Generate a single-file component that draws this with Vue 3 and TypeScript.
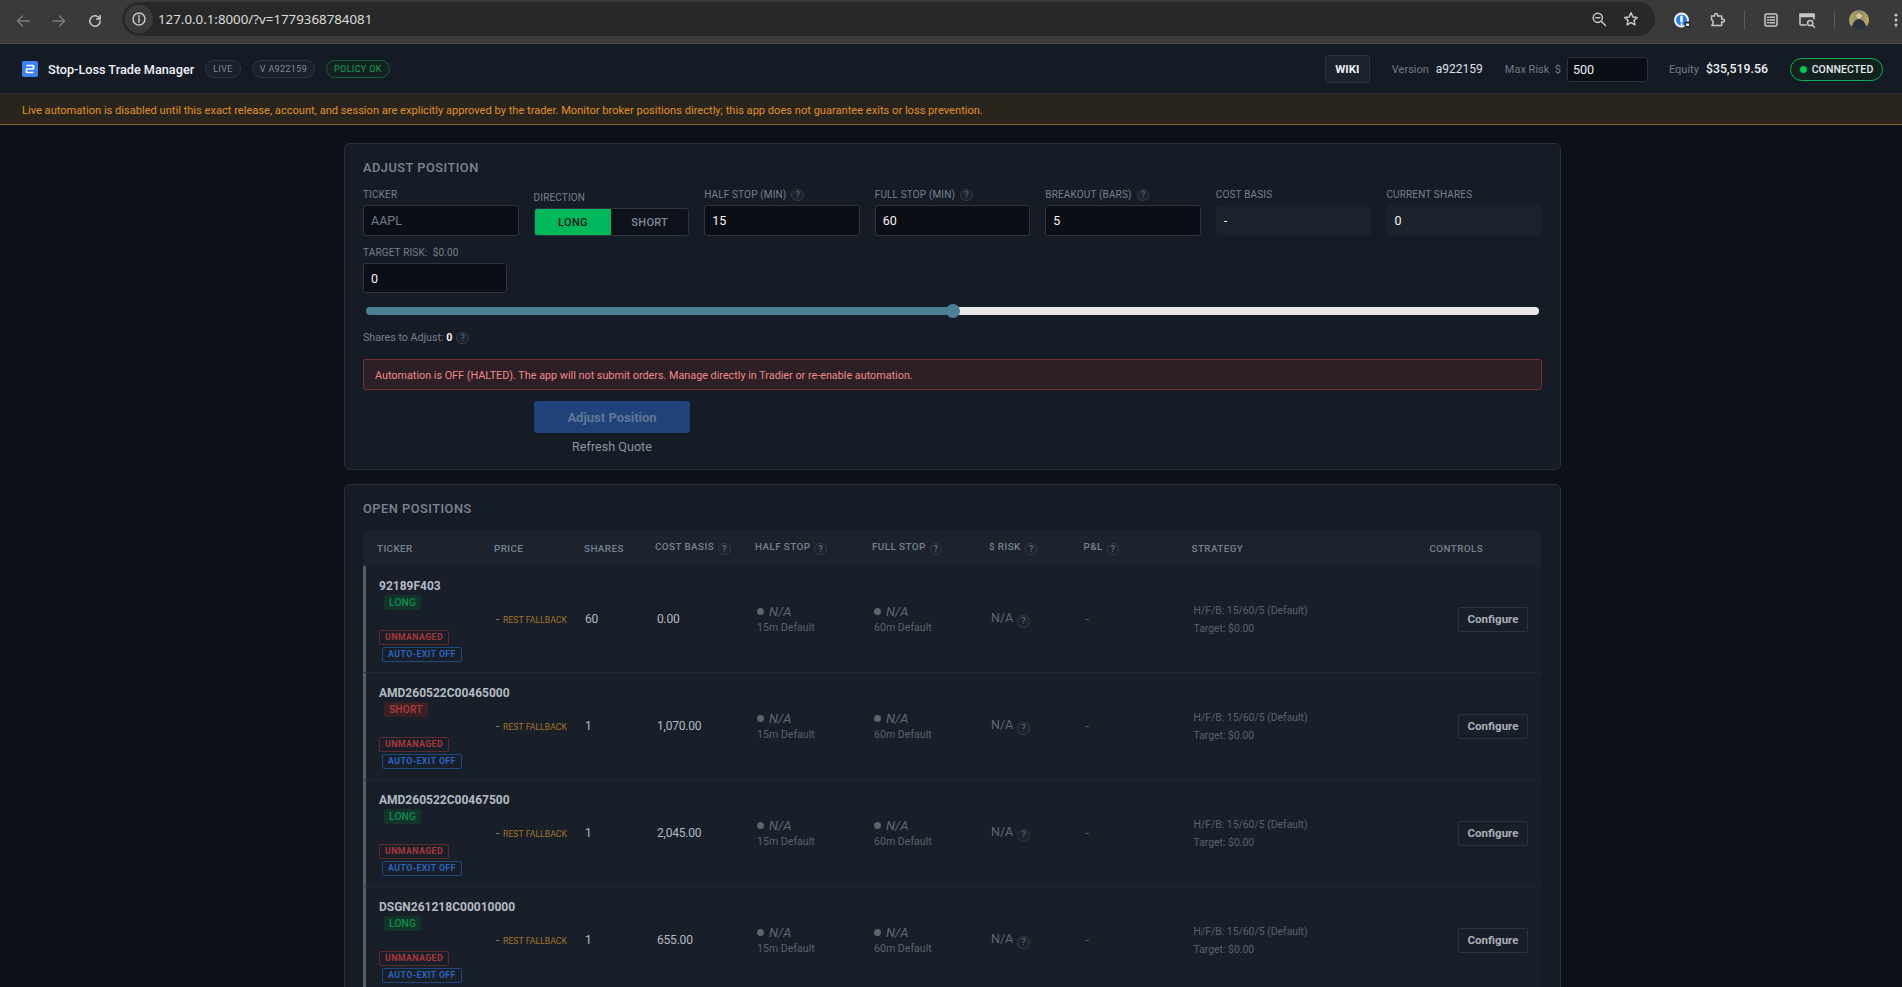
<script setup lang="ts">
interface Pos { ticker: string; dir: 'LONG' | 'SHORT'; shares: string; cost: string }
const rows: Pos[] = [
  { ticker: '92189F403', dir: 'LONG', shares: '60', cost: '0.00' },
  { ticker: 'AMD260522C00465000', dir: 'SHORT', shares: '1', cost: '1,070.00' },
  { ticker: 'AMD260522C00467500', dir: 'LONG', shares: '1', cost: '2,045.00' },
  { ticker: 'DSGN261218C00010000', dir: 'LONG', shares: '1', cost: '655.00' },
]
const heads = [
  { t: 'TICKER' }, { t: 'PRICE' }, { t: 'SHARES' }, { t: 'COST BASIS', q: true }, { t: 'HALF STOP', q: true },
  { t: 'FULL STOP', q: true }, { t: '$ RISK', q: true }, { t: 'P&L', q: true }, { t: 'STRATEGY' }, { t: 'CONTROLS' },
]
</script>

<template>
  <div class="page">
    <div class="browser">
      <div class="nav">
        <svg width="16" height="16" viewBox="0 0 16 16" class="ic dim"><path d="M14 8H3M7.5 3 2.5 8l5 5" /></svg>
        <svg width="16" height="16" viewBox="0 0 16 16" class="ic dim"><path d="M2 8h11M8.5 3l5 5-5 5" /></svg>
        <svg width="16" height="16" viewBox="0 0 16 16" class="ic"><path d="M13.2 8a5.2 5.2 0 1 1-1.5-3.7L13.2 6M13.2 2.4V6H9.6" /></svg>
      </div>
      <div class="omni">
        <span class="site">
          <svg width="16" height="16" viewBox="0 0 16 16" class="ic"><circle cx="8" cy="8" r="6" /><path d="M8 7.2v4M8 4.6v1.2" /></svg>
        </span>
        <span class="url">127.0.0.1:8000/?v=1779368784081</span>
        <span class="omni-end">
          <svg width="16" height="16" viewBox="0 0 16 16" class="ic"><circle cx="6.8" cy="6.8" r="4.6" /><path d="M10.2 10.2 14.5 14.5M4.8 6.8h4" /></svg>
          <svg width="16" height="16" viewBox="0 0 16 16" class="ic"><path d="M8 1.8l1.9 4.1 4.4.5-3.3 3 .9 4.4L8 11.6l-3.9 2.2.9-4.4-3.3-3 4.4-.5z" /></svg>
        </span>
      </div>
      <div class="tools">
        <svg class="t-acc" width="18" height="18" viewBox="0 0 18 18"><circle cx="8.500" cy="9" r="7.500" fill="#f2f5fa" /><circle cx="8.500" cy="9" r="5.500" fill="#2b7de9" /><rect x="7.300" y="4.500" width="2.400" height="7" rx="1" fill="#fff" /><rect x="7.600" y="12.300" width="1.800" height="1.800" fill="#fff" /><rect x="11.500" y="10.500" width="6" height="6" rx="1" fill="#2a2a2a" /><rect x="13" y="12.500" width="3" height="2.500" fill="#e8e8e8" /></svg>
        <svg class="t-puz" width="16" height="16" viewBox="0 0 16 16"><path class="ic" d="M2.500 4h3.200V3a1.500 1.500 0 0 1 3 0v1h4v3.200H14a1.400 1.400 0 0 1 0 2.800h-1.300v3.500H2.800L4 11.500V9L2.500 7.500z" /></svg>
        <span class="sep s1"></span>
        <svg class="t-list" width="16" height="16" viewBox="0 0 16 16"><g class="ic"><rect x="2" y="2" width="12" height="12" rx="1.500" /><path d="M4.500 5.200h1M7 5.200h4.500M4.500 8h1M7 8h4.500M4.500 10.800h1M7 10.800h4.500" /></g></svg>
        <svg class="t-find" width="18" height="18" viewBox="0 0 18 18"><g class="ic"><path d="M8 14H3a1 1 0 0 1-1-1V4h14v4" /><path d="M2 3h14v2.500H2z" fill="#c7c7c7" /><circle cx="12.200" cy="12" r="2.600" /><path d="M14.200 14l2.300 2.300" /></g></svg>
        <span class="sep s2"></span>
        <span class="avatar"></span>
        <svg class="t-dots" width="4" height="16" viewBox="0 0 4 16"><circle cx="2" cy="3" r="1.500" fill="#c7c7c7" /><circle cx="2" cy="8" r="1.500" fill="#c7c7c7" /><circle cx="2" cy="13" r="1.500" fill="#c7c7c7" /></svg>
      </div>
    </div>

    <header class="topbar">
      <div class="brand">
        <svg width="16" height="16" viewBox="0 0 16 16" class="logo"><rect width="16" height="16" rx="2" fill="#3b82f6" /><path d="M4.500 4.500h6.500a.5.500 0 0 1 .5.500v2.500a.5.500 0 0 1-.5.500H5a.5.500 0 0 0-.5.500v2.500a.5.500 0 0 0 .5.500h6.500" fill="none" stroke="#fff" stroke-width="1.700" /></svg>
        <span class="title">Stop-Loss Trade Manager</span>
        <span class="chip">LIVE</span>
        <span class="chip">V A922159</span>
        <span class="chip ok">POLICY OK</span>
      </div>
      <div class="status">
        <button class="wiki">WIKI</button>
        <span class="lab ver">Version</span><span class="val">a922159</span>
        <span class="lab risk">Max Risk&nbsp; $</span><input class="risk-in" value="500" />
        <span class="lab eq">Equity</span><span class="val strong">$35,519.56</span>
        <span class="conn"><i></i>CONNECTED</span>
      </div>
    </header>

    <div class="warn">Live automation is disabled until this exact release, account, and session are explicitly approved by the trader. Monitor broker positions directly; this app does not guarantee exits or loss prevention.</div>

    <main class="main">
      <section class="panel adjust">
        <h2>ADJUST POSITION</h2>
        <div class="form">
          <label class="f"><span class="l">TICKER</span><input placeholder="AAPL" /></label>
          <div class="f"><span class="l dirl">DIRECTION</span>
            <div class="toggle"><span class="on">LONG</span><span>SHORT</span></div>
          </div>
          <label class="f"><span class="l">HALF STOP (MIN) <i class="q">?</i></span><input value="15" /></label>
          <label class="f"><span class="l">FULL STOP (MIN) <i class="q">?</i></span><input value="60" /></label>
          <label class="f"><span class="l">BREAKOUT (BARS) <i class="q">?</i></span><input value="5" /></label>
          <label class="f"><span class="l">COST BASIS</span><input class="ro" value="-" readonly /></label>
          <label class="f"><span class="l">CURRENT SHARES</span><input class="ro" value="0" readonly /></label>
        </div>
        <label class="f target"><span class="l">TARGET RISK:&nbsp; $0.00</span><input value="0" /></label>
        <input class="slider" type="range" min="0" max="100" value="50" />
        <div class="shares"><span>Shares to Adjust: <b>0</b></span><i class="q">?</i></div>
        <div class="alert">Automation is OFF (HALTED). The app will not submit orders. Manage directly in Tradier or re-enable automation.</div>
        <div class="actions">
          <button class="primary">Adjust Position</button>
          <span class="refresh">Refresh Quote</span>
        </div>
      </section>

      <section class="panel positions">
        <h2>OPEN POSITIONS</h2>
        <table>
          <colgroup>
            <col style="width:117px" /><col style="width:90px" /><col style="width:71px" /><col style="width:100px" /><col style="width:117px" />
            <col style="width:117px" /><col style="width:94.5px" /><col style="width:108px" /><col style="width:238px" /><col style="width:125.5px" />
          </colgroup>
          <thead>
            <tr><th v-for="h in heads" :key="h.t">{{ h.t }}<i v-if="h.q" class="q">?</i></th></tr>
          </thead>
          <tbody>
            <tr v-for="r in rows" :key="r.ticker">
              <td class="tick">
                <div class="name">{{ r.ticker }}</div>
                <div class="dir" :class="r.dir.toLowerCase()">{{ r.dir }}</div>
                <div class="tag un">UNMANAGED</div>
                <div class="tag ae">AUTO-EXIT OFF</div>
              </td>
              <td class="price">- <span>REST FALLBACK</span></td>
              <td class="num sh">{{ r.shares }}</td>
              <td class="num co">{{ r.cost }}</td>
              <td class="stop"><div class="na"><i class="dot"></i><em>N/A</em></div><div class="sub">15m Default</div></td>
              <td class="stop"><div class="na"><i class="dot"></i><em>N/A</em></div><div class="sub">60m Default</div></td>
              <td class="rk">N/A <i class="q">?</i></td>
              <td class="pl">-</td>
              <td class="strat"><div>H/F/B: 15/60/5 (Default)</div><div>Target: $0.00</div></td>
              <td class="ctl"><button>Configure</button></td>
            </tr>
          </tbody>
        </table>
      </section>
    </main>
  </div>
</template>

<style>
html, body { margin: 0; height: 100%; overflow: hidden; background: #0c1018; }
</style>

<style scoped>
.page { height: 987px; overflow: hidden; background: #0c1018; font-family: Roboto, "Noto Sans", sans-serif; color: #e6e9ee; display: flex; flex-direction: column; }
.browser { height: 43px; flex: none; background: #3a3a3a; border-bottom: 1px solid #4a4a4a; display: flex; align-items: center; padding-left: 15px; box-sizing: content-box; }
.nav { display: flex; gap: 20px; width: 107px; flex: none; margin-top: -2px; }
.ic { fill: none; stroke: #c7c7c7; stroke-width: 1.500; stroke-linecap: round; stroke-linejoin: round; }
.ic.dim { stroke: #7b7b7b; }
.omni { width: 1533px; height: 34px; flex: none; background: #282828; border-radius: 17px; display: flex; align-items: center; margin-top: -6px; }
.site { width: 28px; height: 28px; margin-left: 3px; border-radius: 50%; background: #3a3a3a; display: flex; align-items: center; justify-content: center; flex: none; }
.url { margin-left: 5px; font-size: 13.300px; color: #dcdcdc; font-family: "Noto Sans", sans-serif; }
.omni-end { margin-left: auto; margin-right: 16px; display: flex; gap: 16px; }
.tools { flex: 1; display: flex; align-items: center; margin-top: -4px; padding-left: 18px; }
.tools .sep { width: 1px; height: 18px; background: #5c5c5c; }
.t-puz { margin-left: 18px; }
.s1 { margin-left: 19px; }
.t-list { margin-left: 18px; }
.t-find { margin-left: 19px; }
.s2 { margin-left: 18px; }
.avatar { width: 20px; height: 20px; border-radius: 50%; margin-left: 14px; background: radial-gradient(circle at 50% 30%, #d9bda0 0 15%, transparent 17%), radial-gradient(ellipse 38% 55% at 50% 100%, #2a3340 0 96%, transparent 100%), linear-gradient(90deg, #c2a95f, #7f8e66 50%, #c2a95f); }
.t-dots { margin-left: 25px; }

.topbar { height: 50px; flex: none; box-sizing: border-box; background: #151b25; border-bottom: 1px solid #2a303a; display: flex; align-items: center; justify-content: space-between; padding: 1px 19px 0 22px; }
.brand { display: flex; align-items: center; }
.logo { margin-right: 10px; }
.title { font-size: 12.700px; font-weight: 500; color: #eef1f5; margin-right: 11px; white-space: nowrap; }
.chip { height: 18px; box-sizing: border-box; border: 1px solid #2f3744; background: #1a212c; border-radius: 9px; font-size: 9px; letter-spacing: .35px; color: #7f8a98; padding: 0 7px; display: flex; align-items: center; margin-right: 11px; white-space: nowrap; }
.chip.ok { color: #12a150; border-color: #14603c; background: #14211f; }
.status { display: flex; align-items: center; white-space: nowrap; }
.wiki { width: 45px; height: 28px; background: #1b222c; border: 1px solid #2c333e; border-radius: 3px; color: #eef1f5; font: 700 11.500px Roboto, sans-serif; margin-right: 22px; padding: 0; }
.lab { font-size: 11px; color: #6f7b89; }
.val { font-size: 12px; color: #dfe3e8; margin-left: 7px; }
.val.strong { font-size: 12.300px; font-weight: 500; color: #eef1f5; margin-left: 7px; }
.risk { margin-left: 22px; }
.risk-in { width: 81px; height: 25px; box-sizing: border-box; margin-left: 6px; background: #0b0e15; border: 1px solid #2c323d; border-radius: 3px; color: #eef1f5; font: 12.500px Roboto, sans-serif; padding: 0 5px; outline: none; }
.eq { margin-left: 21px; }
.conn { margin-left: 22px; height: 23px; width: 93px; box-sizing: border-box; border: 1px solid #10ad5a; border-radius: 12px; background: #12221f; display: flex; align-items: center; justify-content: center; font-size: 10.500px; font-weight: 500; color: #e6e9ee; letter-spacing: .1px; }
.conn i { width: 7px; height: 7px; border-radius: 50%; background: #00c853; margin-right: 5px; }

.warn { height: 31px; flex: none; box-sizing: border-box; background: #2a251c; border-bottom: 1px solid #8a5f22; font-size: 11.100px; color: #e08f2c; display: flex; align-items: center; padding: 2px 0 0 22px; white-space: nowrap; }

.main { width: 1217px; margin: 18px 0 0 344px; display: flex; flex-direction: column; gap: 14px; flex: none; }
.panel { background: #161c25; border: 1px solid #2b313b; border-radius: 6px; padding: 0 18px; }
h2 { margin: 0; font-size: 12.800px; font-weight: 500; letter-spacing: .5px; color: #7b8694; line-height: 18px; padding-top: 15px; }
.form { display: grid; grid-template-columns: repeat(7, 1fr); gap: 15px; margin-top: 11px; }
.f { display: flex; flex-direction: column; justify-content: flex-end; }
.l { font-size: 10px; color: #758190; letter-spacing: .15px; line-height: 14px; margin-bottom: 3px; display: flex; align-items: center; white-space: nowrap; gap: 5px; }
.dirl { margin-bottom: 3px; }
input { background: #0b0e15; border: 1px solid #2f3540; border-radius: 3px; height: 31px; box-sizing: border-box; padding: 0 7px; color: #f2f4f7; font: 12.500px Roboto, sans-serif; outline: none; width: 100%; min-width: 0; }
input::placeholder { color: #747d89; }
input.ro { background: #1b222c; border-color: #1b222c; }
.toggle { height: 28px; box-sizing: border-box; display: grid; grid-template-columns: 1fr 1fr; background: #0d1119; border: 1px solid #2f3540; border-radius: 3px; overflow: hidden; font-size: 11px; color: #7f8a98; letter-spacing: .3px; }
.toggle span { display: flex; align-items: center; justify-content: center; font-weight: 500; }
.toggle .on { background: #00b85c; color: #0c1a14; }
.q { display: inline-flex; width: 12.500px; height: 12.500px; box-sizing: border-box; border: 1px solid #333b47; border-radius: 50%; background: #1c232d; align-items: center; justify-content: center; font-size: 8.500px; font-style: normal; color: #6a7584; flex: none; letter-spacing: 0; }
.target { width: 144px; margin-top: 10px; }
.target input { height: 30px; }
.slider { appearance: none; -webkit-appearance: none; display: block; width: 1173px; height: 8px; margin: 14px 0 0 3px; padding: 0; border: 0; border-radius: 4px; background: linear-gradient(90deg, #4b7f93 0 50%, #e8e9e9 50%); }
.slider::-webkit-slider-thumb { -webkit-appearance: none; width: 14px; height: 14px; border-radius: 50%; background: #4b8197; }
.shares { display: flex; align-items: center; gap: 4px; font-size: 10.700px; color: #758190; margin-top: 15px; line-height: 16px; }
.shares b { color: #f0f2f5; }
.alert { margin-top: 13px; height: 31px; box-sizing: border-box; background: #2d1f26; border: 1px solid #7a2f38; border-radius: 3px; color: #f08a8a; font-size: 10.800px; display: flex; align-items: center; padding: 1px 0 0 11px; }
.actions { width: 156px; margin: 11px 0 0 171px; padding-bottom: 13px; display: flex; flex-direction: column; align-items: center; }
.primary { width: 100%; height: 32px; background: #20427a; border: 0; border-radius: 3px; color: #617796; font: 700 13px Roboto, sans-serif; }
.refresh { font-size: 12.600px; color: #8a939f; line-height: 18px; margin-top: 5px; }

.positions h2 { padding-top: 15px; }
table { width: 1178px; table-layout: fixed; border-collapse: separate; border-spacing: 0; margin-top: 12px; }
th { height: 36px; box-sizing: border-box; background: #1c232d; text-align: left; padding: 0 0 0 14px; font-size: 9.900px; font-weight: 500; color: #76828f; letter-spacing: .4px; white-space: nowrap; }
th:first-child { border-top-left-radius: 4px; }
th:last-child { border-top-right-radius: 4px; }
th .q { margin-left: 4px; vertical-align: -2px; }
td { padding: 0 0 0 14px; border-bottom: 1px solid #212832; background: #181f29; vertical-align: middle; white-space: nowrap; color: #aab1b9; }
.tick { border-left: 3px solid #565c64; padding: 11px 0 10px 13px; }
.name { font-size: 12px; font-weight: 700; color: #b4bac2; line-height: 18px; }
.dir { width: fit-content; height: 15px; margin-left: 5px; margin-bottom: 20px; padding: 0 5px; border-radius: 2px; font-size: 10.200px; font-weight: 500; line-height: 15px; letter-spacing: .2px; }
.dir.long { background: #12342a; color: #0f8f4e; }
.dir.short { background: #3a2025; color: #b33a3e; }
.tag { width: fit-content; height: 15px; box-sizing: border-box; border-radius: 2px; border: 1px solid; font-size: 8.800px; font-weight: 700; line-height: 13px; letter-spacing: .4px; padding: 0 5px; }
.un { color: #a8373b; border-color: #5f2a2e; }
.ae { color: #2a65bd; border-color: #1f4a80; margin: 2px 0 0 3px; }
.price { font-size: 11.500px; padding-left: 16px; color: #8b929a; }
.price span { font-size: 8.700px; color: #a2742a; margin-left: 1px; }
.num { font-size: 12px; letter-spacing: -.2px; color: #b4bac2; }
.sh { padding-left: 15px; }
.co { padding-left: 16px; }
.na { display: flex; align-items: center; line-height: 16px; padding: 1px 0 0 2px; }
.dot { width: 7px; height: 7px; border-radius: 50%; background: #5e646c; margin-right: 5px; }
.na em { font-size: 13px; color: #5f6873; }
.sub { font-size: 10.600px; color: #59626d; line-height: 16px; padding-left: 2px; }
.stop { vertical-align: middle; }
.rk { font-size: 12.500px; color: #5f6873; padding-left: 16px; }
.rk .q { vertical-align: -2px; margin-left: 1px; }
.pl { color: #5f6873; font-size: 12px; padding-left: 16px; }
.strat { font-size: 10.400px; color: #59626d; line-height: 18px; padding: 1px 0 0 16px; }
.ctl { text-align: right; padding-right: 13px; }
.ctl button { width: 70px; height: 25px; background: #181f29; border: 1px solid #2c333d; border-radius: 2px; color: #a8afb7; font: 700 11.500px Roboto, sans-serif; padding: 0; }
</style>
